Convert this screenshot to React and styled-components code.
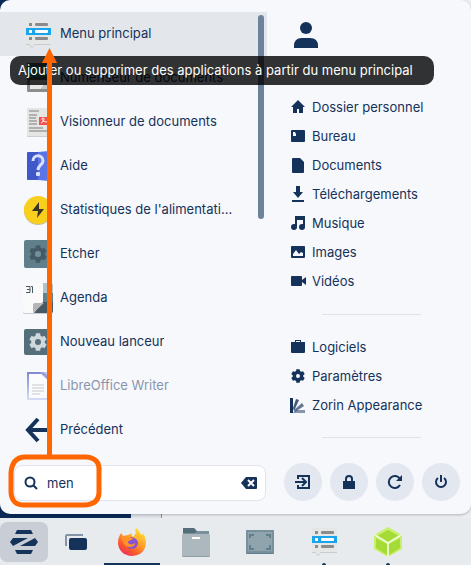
import React, { useState } from 'react'
import styled, { createGlobalStyle } from 'styled-components'

const GlobalStyle = createGlobalStyle`
  *, *::before, *::after {
    box-sizing: border-box;
  }
  body {
    margin: 0;
    background: #e8ebee;
    font-family: Inter, 'Liberation Sans', sans-serif;
    font-size: 13px;
    line-height: 20px;
    color: #15325a;
  }
  button, input {
    font: inherit;
    color: inherit;
  }
`

const Desktop = styled.div`
  display: flex;
  flex-direction: column;
  min-height: 100vh;
  background: linear-gradient(to right, #0b2a58 131px, #dfe4ea 131px, #dfe4ea 161px, #8c9299 161px, #8c9299 162px, #eceef1 162px);
`

const Menu = styled.main`
  position: relative;
  display: grid;
  grid-template-columns: minmax(0, 1fr) 204px;
  padding: 12px 0 13px;
  margin-bottom: 4px;
  background: #f6f8fc;
  border-radius: 10px;
  box-shadow: 0 1px 3px rgba(0, 0, 0, 0.25);
`

const Apps = styled.section`
  position: relative;
`

const AppList = styled.ul`
  list-style: none;
  margin: 0;
  padding: 0;
`

const AppItem = styled.li`
  position: relative;
`

const AppButton = styled.button`
  display: flex;
  align-items: center;
  gap: 6px;
  width: 100%;
  height: 44px;
  padding: 0 32px 0 22px;
  border: 0;
  text-align: left;
  cursor: pointer;
  background: ${(props) => (props.$active ? '#e3e7eb' : 'transparent')};
  opacity: ${(props) => (props.$faded ? 0.5 : 1)};
  svg {
    flex: none;
  }
  span {
    padding-bottom: 2px;
    overflow: hidden;
    white-space: nowrap;
    text-overflow: ellipsis;
  }
`

const Tooltip = styled.div`
  position: absolute;
  top: 100%;
  left: 10px;
  z-index: 2;
  min-width: 424px;
  padding: 4px 8px 5px;
  border-radius: 10px;
  background: rgba(0, 0, 0, 0.8);
  color: #fff;
  white-space: nowrap;
`

const ScrollThumb = styled.div`
  position: absolute;
  top: 3px;
  right: 3px;
  width: 6px;
  height: 204px;
  border-radius: 3px;
  background: #6d839b;
`

const Search = styled.label`
  display: flex;
  align-items: center;
  gap: 9px;
  height: 36px;
  margin: 13px 1px 0 14px;
  padding: 0 8px 0 9px;
  background: #fff;
  border: 1px solid #e1e4ed;
  border-radius: 8px;
  svg {
    flex: none;
  }
`

const SearchInput = styled.input`
  flex: 1;
  min-width: 0;
  padding: 0;
  border: 0;
  outline: 0;
  background: transparent;
`

const ClearButton = styled.button`
  display: flex;
  padding: 0;
  border: 0;
  background: transparent;
  cursor: pointer;
`

const Side = styled.section`
  display: flex;
  flex-direction: column;
  padding-left: 17px;
`

const Avatar = styled.button`
  display: flex;
  align-self: flex-start;
  margin: 8px 0 42px 8px;
  padding: 0;
  border: 0;
  background: transparent;
`

const Places = styled.nav`
  display: flex;
  flex-direction: column;
`

const Place = styled.a`
  display: flex;
  align-items: center;
  gap: 6px;
  height: 29px;
  padding-left: 6px;
  color: inherit;
  text-decoration: none;
`

const Divider = styled.hr`
  width: 99px;
  margin: ${(props) => (props.$last ? '18px 0 0 38px' : '19px 0 17px 38px')};
  border: 0;
  border-top: 1px solid #dfe3eb;
`

const Session = styled.div`
  display: flex;
  gap: 8px;
  margin-top: auto;
`

const RoundButton = styled.button`
  display: grid;
  place-items: center;
  width: 38px;
  height: 38px;
  padding: 0;
  border: 0;
  border-radius: 50%;
  background: #e3e7ef;
  cursor: pointer;
`

const Annotation = styled.svg`
  position: absolute;
  top: 0;
  left: 0;
  z-index: 3;
  pointer-events: none;
`

const Taskbar = styled.footer`
  display: flex;
  flex: 1;
  min-height: 47px;
  background: #e8ebee;
`

const Running = styled.div`
  display: flex;
  gap: 8px;
`

const TaskButton = styled.button`
  position: relative;
  display: grid;
  place-items: center;
  width: 56px;
  padding: 0;
  border: 0;
  background: transparent;
  cursor: pointer;
  &::after {
    content: '';
    position: absolute;
    bottom: 0;
    width: ${(props) => (props.$state === 'focused' ? '100%' : '4px')};
    height: 2px;
    border-radius: ${(props) => (props.$state === 'focused' ? 0 : '2px 2px 0 0')};
    background: #15325a;
    display: ${(props) => (props.$state ? 'block' : 'none')};
  }
`

const StartButton = styled(TaskButton)`
  width: 48px;
  height: 40px;
  margin-top: 4px;
  border-radius: 7px;
  background: #c9ced6;
`

const navy = '#15325a'

const gearPath = (cx, cy, r, hole) => {
  const pts = []
  for (let i = 0; i < 6; i++) {
    const a = (i * Math.PI) / 3 - Math.PI / 2
    const at = (d, q) => `${(cx + q * Math.cos(a + d)).toFixed(2)},${(cy + q * Math.sin(a + d)).toFixed(2)}`
    pts.push(at(-0.38, r * 0.76), at(-0.24, r), at(0.24, r), at(0.38, r * 0.76))
  }
  return `M${pts.join('L')}Z M${cx - hole},${cy} a${hole},${hole} 0 1 0 ${hole * 2},0 a${hole},${hole} 0 1 0 ${-hole * 2},0Z`
}

const Icon = ({ size = 32, children }) => (
  <svg width={size} height={size} viewBox={`0 0 ${size} ${size}`} aria-hidden="true">{children}</svg>
)

const MenuIcon = () => (
  <Icon>
    <path d="M4 3h25v24H13l-3 3-3-3H4z" fill="#c9cbcc" />
    <path d="M4 2h25v24H13l-3 3-3-3H4z" fill="#e5e6e6" />
    <path d="M4 10h25v7H4z" fill="#19a5ee" />
    <g fill="#8b8b8b">
      <rect x="7" y="5" width="3" height="3" />
      <rect x="13" y="5" width="13" height="3" rx="1" />
      <rect x="7" y="19" width="3" height="3" />
      <rect x="13" y="19" width="13" height="3" rx="1" />
    </g>
    <g fill="#fff">
      <rect x="7" y="12" width="3" height="3" />
      <rect x="13" y="12" width="13" height="3" rx="1" />
    </g>
  </Icon>
)

const ScannerIcon = () => (
  <Icon>
    <rect x="5" y="1" width="23" height="17" rx="1" fill="#565b5b" />
    <path d="M7 4h20v11H7z" fill="#169a8a" />
    <rect x="5" y="18" width="23" height="12" rx="1" fill="#8d8d8d" />
    <path d="M8 18h18l-7 9H8z" fill="#e8e8e8" />
    <path d="M26 18v9h-7z" fill="#c4c4c4" />
  </Icon>
)

const ViewerIcon = () => (
  <Icon>
    <rect x="5" y="3" width="23" height="28" rx="1" fill="#cfcfcf" />
    <rect x="5" y="2" width="23" height="28" rx="1" fill="#e5e5e4" />
    <path d="M7 9h8M7 12h7M7 15h8M7 18h8M7 22h14M7 25h18" stroke="#b0b0b0" strokeWidth="2" />
    <path d="M7 5h10" stroke="#808080" />
    <path d="M17 11h11v8H17z" fill="#f2524d" />
    <path d="M19 17c3-1 4-5 2-5s-1 4 4 4" fill="none" stroke="#fff" />
  </Icon>
)

const HelpIcon = () => (
  <Icon>
    <path d="M5 3q0-1 1-1h10v28H6q-1 0-1-1z" fill="#4058c8" />
    <path d="M16 2l11-1v30l-11-1z" fill="#5975e6" />
    <path d="M11 11c0-7 10-7 10 0 0 4-5 4-5 9" fill="none" stroke="#d9e0fa" strokeWidth="3" />
    <rect x="14" y="22" width="4" height="4" rx="1" fill="#d9e0fa" />
  </Icon>
)

const PowerStatsIcon = () => (
  <Icon>
    <circle cx="16" cy="17" r="14" fill="#c9bd91" />
    <circle cx="16" cy="16" r="14" fill="#f9cf1e" />
    <path d="M17 8l-7 9h6l-1 7 7-9h-5z" fill="#39342a" />
  </Icon>
)

const EtcherIcon = () => (
  <Icon>
    <rect x="2" y="2" width="28" height="28" rx="2" fill="#607f8b" />
    <path d={gearPath(16, 16, 9, 3)} fill="#455a64" fillRule="evenodd" />
    <circle cx="16" cy="16" r="3" fill="#71909b" />
  </Icon>
)

const CalendarIcon = () => (
  <Icon>
    <rect x="1" y="2" width="30" height="30" rx="2" fill="#c9cbce" />
    <path d="M3 1h18v19l-9 11H3q-2 0-2-2V3q0-2 2-2z" fill="#fafafa" />
    <path d="M21 1h8q2 0 2 2v8H21z" fill="#b0c3cb" />
    <path d="M21 11h10v9H21z" fill="#5f8290" />
    <path d="M21 20h10v9q0 2-2 2H12z" fill="#455a64" />
    <path d="M11 31v-8q0-2 2-2h9z" fill="#b5b5b5" />
    <path d="M4 4.500h4v6H4M5 7.500h3M9 4.500h1.500v6.500" fill="none" stroke="#455a64" />
  </Icon>
)

const LauncherIcon = () => (
  <Icon>
    <rect x="2" y="3" width="28" height="26" rx="2" fill="#546e7a" />
    <path d={gearPath(16, 16, 9, 3)} fill="#cfd8dc" fillRule="evenodd" />
  </Icon>
)

const WriterIcon = () => (
  <Icon>
    <defs>
      <linearGradient id="writer" x1="0" y1="0" x2="0" y2="1">
        <stop offset="0" stopColor="#1119a8" />
        <stop offset="1" stopColor="#b3bdf0" />
      </linearGradient>
    </defs>
    <path d="M6 3h20v26H6z" fill="#fff" stroke="url(#writer)" strokeWidth="2" />
    <path d="M17 2h10v9z" fill="#3e49bb" />
    <path d="M21 2h6v5z" fill="#8792df" />
    <path d="M10 15h12M10 18h12M10 21h12M10 24h8" stroke="#9b9b9b" />
  </Icon>
)

const BackIcon = () => (
  <Icon>
    <path d="M16 5L6 16l10 11M6 16h21" fill="none" stroke={navy} strokeWidth="4" />
  </Icon>
)

const apps = [
  { name: 'Menu principal', icon: <MenuIcon /> },
  { name: 'Numériseur de documents', icon: <ScannerIcon /> },
  { name: 'Visionneur de documents', icon: <ViewerIcon /> },
  { name: 'Aide', icon: <HelpIcon /> },
  { name: "Statistiques de l'alimentation", icon: <PowerStatsIcon /> },
  { name: 'Etcher', icon: <EtcherIcon /> },
  { name: 'Agenda', icon: <CalendarIcon /> },
  { name: 'Nouveau lanceur', icon: <LauncherIcon /> },
  { name: 'LibreOffice Writer', icon: <WriterIcon />, faded: true },
  { name: 'Précédent', icon: <BackIcon /> },
]

const places = [
  { name: 'Dossier personnel', icon: <path d="M8 1l7 7h-2v6h-4v-4H7v4H3V8H1z" /> },
  { name: 'Bureau', icon: <path fillRule="evenodd" d="M2 2h12q1 0 1 1v10q0 1-1 1H2q-1 0-1-1V3q0-1 1-1zM3 4v4h3V6L5 4z" /> },
  { name: 'Documents', icon: <path d="M3 1h7l4 4v10q0 1-1 1H3q-1 0-1-1V2q0-1 1-1z" /> },
  { name: 'Téléchargements', icon: <path d="M6 0h4v6h3l-5 6-5-6h3zM2 14h12v2H2z" /> },
  { name: 'Musique', icon: <path d="M5 1h10v11a3 3 0 1 1-3-3h1V5H7v7a3 3 0 1 1-3-3h1z" /> },
  { name: 'Images', icon: <path fillRule="evenodd" d="M2 2h12q1 0 1 1v10q0 1-1 1H2q-1 0-1-1V3q0-1 1-1zM3 12h10V9l-2-1-2 2-3-4-3 4z" /> },
  { name: 'Vidéos', icon: <path d="M2 3h9q1 0 1 1v3l4-3v8l-4-3v3q0 1-1 1H2q-1 0-1-1V4q0-1 1-1z" /> },
]

const system = [
  { name: 'Logiciels', icon: <path fillRule="evenodd" d="M5 3V1h6v2h4v10q0 1-1 1H2q-1 0-1-1V3zM6 3h4V2H6z" /> },
  { name: 'Paramètres', icon: <path fillRule="evenodd" d={gearPath(8, 8, 7, 2)} /> },
  {
    name: 'Zorin Appearance',
    icon: (
      <>
        <path d="M0 1h3v15H0z" />
        <path d="M3 11l3-9 3 1-5 11z" opacity=".8" />
        <path d="M4 13l8-7 2 3-9 6z" opacity=".65" />
        <path d="M2 16l5-3h8v3z" opacity=".5" />
      </>
    ),
  },
]

const PlaceLink = ({ name, icon }) => (
  <Place href="#">
    <svg width="16" height="16" viewBox="0 0 16 16" fill={navy} aria-hidden="true">{icon}</svg>
    {name}
  </Place>
)

const session = [
  { name: 'Se déconnecter', icon: <path d="M4 6V3h11v12H4v-3M1 9h10M8 5l4 4-4 4" fill="none" stroke={navy} strokeWidth="2" /> },
  { name: 'Verrouiller', icon: <path fillRule="evenodd" fill={navy} d="M3 8h2V6q0-4 4-4t4 4v2h2v8H3zM7 8h4V6q0-2-2-2T7 6z" /> },
  {
    name: 'Redémarrer',
    icon: (
      <>
        <path d="M14 12a6 6 0 1 1 0-6" fill="none" stroke={navy} strokeWidth="2" />
        <path d="M16 2v6h-6z" fill={navy} />
      </>
    ),
  },
  { name: 'Éteindre', icon: <path d="M6 5a5 5 0 1 0 6 0M9 2v7" fill="none" stroke={navy} strokeWidth="2" /> },
]

const ZorinLogo = () => (
  <svg width="28" height="24" viewBox="0 0 28 24" fill={navy} aria-hidden="true">
    <path d="M7 0h14l2 4H5zM5 20h18l-2 4H7zM3 8h15L3 16l-3-4zM25 8l3 4-3 4H10z" />
  </svg>
)

const WindowsIcon = () => (
  <svg width="22" height="16" viewBox="0 0 22 16" aria-hidden="true">
    <path d="M1 12V2q0-1 1-1h16" fill="none" stroke="#8493a8" strokeWidth="2" />
    <rect x="4" y="4" width="18" height="12" rx="2" fill={navy} />
  </svg>
)

const FirefoxIcon = () => (
  <svg width="28" height="30" viewBox="0 0 28 30" aria-hidden="true">
    <defs>
      <linearGradient id="fox" x1=".85" y1=".1" x2=".25" y2="1">
        <stop offset="0" stopColor="#ffe135" />
        <stop offset=".45" stopColor="#ff9724" />
        <stop offset=".75" stopColor="#fa542e" />
        <stop offset="1" stopColor="#ee2f67" />
      </linearGradient>
    </defs>
    <path d="M18 1c4 3 4 6 6 7 0 0 1-1 1-2 6 9 3 23-11 23C2 29-4 17 3 6l2 3 5-1c2-1 4-2 4-2-1 2 0 3 1 4l3-4c-1-2-1-3 0-5z" fill="url(#fox)" />
    <circle cx="14" cy="16" r="6" fill="#8854d3" />
    <path d="M14 10c4-2 7 1 8 5l-3-2c-1-2-3-2-5-3z" fill="#ffb82e" />
    <path d="M3 10c3-2 6 0 7 0l5 1c-1 3-5 2-5 4 0 3 5 3 7 1 1 4-8 6-11 1z" fill="#ff9327" />
  </svg>
)

const FilesIcon = () => (
  <svg width="28" height="30" viewBox="0 0 28 30" aria-hidden="true">
    <path d="M1 1h11l2 3h13v6H1z" fill="#78909c" />
    <path d="M1 1h11l3 3-2 2H1z" fill="#546e7a" />
    <rect y="8" width="28" height="22" rx="1" fill="#8f9ca3" />
    <rect y="7" width="28" height="22" rx="1" fill="#adb8be" />
    <path d="M10 10h8v2h-8z" fill="#fff" />
  </svg>
)

const ScreenIcon = () => (
  <svg width="28" height="24" viewBox="0 0 28 24" aria-hidden="true">
    <rect y="1" width="28" height="23" rx="1" fill="#607d8b" />
    <rect x="1" y="1" width="26" height="21" fill="#90a4ae" stroke="#78909c" strokeWidth="2" />
    <path d="M4 8V5h4M20 5h4v3M4 15v4h4M20 19h4v-4" fill="none" stroke="#607d8b" strokeWidth="2" />
  </svg>
)

const CubeIcon = () => (
  <svg width="28" height="30" viewBox="0 0 28 30" aria-hidden="true">
    <path d="M14 0l14 8v14l-14 8-14-8V8z" fill="#c6f06c" />
    <path d="M14 3l11 6-11 6L3 9zM2 11l11 6v11L2 21zM26 11v10l-11 7V17z" fill="#a5db36" />
    <path d="M1 8l13 8 13-8M14 16v14" fill="none" stroke="#f1fbdc" strokeWidth="1.5" />
  </svg>
)

export default function App() {
  const [query, setQuery] = useState('men')

  return (
    <>
      <GlobalStyle />
      <Desktop>
        <Menu>
          <Apps>
            <AppList>
              {apps.map((app, i) => (
                <AppItem key={app.name}>
                  <AppButton $active={i === 0} $faded={app.faded}>
                    {app.icon}
                    <span>{app.name}</span>
                  </AppButton>
                  {i === 0 && (
                    <Tooltip role="tooltip">
                      Ajouter ou supprimer des applications à partir du menu principal
                    </Tooltip>
                  )}
                </AppItem>
              ))}
            </AppList>
            <ScrollThumb />
            <Search>
              <svg width="14" height="14" viewBox="0 0 14 14" fill="none" stroke={navy} strokeWidth="2" aria-hidden="true">
                <circle cx="6" cy="6" r="4.5" />
                <path d="M9 9l4 4" />
              </svg>
              <SearchInput
                aria-label="Rechercher"
                value={query}
                onChange={(e) => setQuery(e.target.value)}
              />
              <ClearButton aria-label="Effacer" onClick={() => setQuery('')}>
                <svg width="16" height="12" viewBox="0 0 16 12" aria-hidden="true">
                  <path d="M5 0h10q1 0 1 1v10q0 1-1 1H5L0 6z" fill={navy} />
                  <path d="M7 3l6 6M13 3L7 9" stroke="#fff" strokeWidth="2" />
                </svg>
              </ClearButton>
            </Search>
          </Apps>

          <Side>
            <Avatar aria-label="Utilisateur">
              <svg width="28" height="30" viewBox="0 0 28 30" fill={navy} aria-hidden="true">
                <circle cx="14" cy="8" r="6" />
                <path d="M2 28v-2q0-8 8-8h8q8 0 8 8v2z" />
              </svg>
            </Avatar>
            <Places>
              {places.map((p) => <PlaceLink key={p.name} {...p} />)}
            </Places>
            <Divider />
            <Places>
              {system.map((p) => <PlaceLink key={p.name} {...p} />)}
            </Places>
            <Divider $last />
            <Session>
              {session.map((s) => (
                <RoundButton key={s.name} aria-label={s.name}>
                  <Icon size={18}>{s.icon}</Icon>
                </RoundButton>
              ))}
            </Session>
          </Side>

          <Annotation width="110" height="514" viewBox="0 0 110 514" aria-hidden="true">
            <path d="M49.500 457V60" stroke="#ff6600" strokeWidth="5" />
            <path d="M49.500 48L57 63H42z" fill="#ff6600" />
            <path
              d="M24 457H86Q100 458 99 471V492Q99 504 85 505H26Q11 506 11 491V473Q12 458 24 457Z"
              fill="none"
              stroke="#ff6600"
              strokeWidth="5"
            />
          </Annotation>
        </Menu>

        <Taskbar>
          <StartButton aria-label="Menu Zorin"><ZorinLogo /></StartButton>
          <TaskButton aria-label="Fenêtres"><WindowsIcon /></TaskButton>
          <Running>
            <TaskButton $state="focused" aria-label="Firefox"><FirefoxIcon /></TaskButton>
            <TaskButton aria-label="Fichiers"><FilesIcon /></TaskButton>
            <TaskButton aria-label="Capture"><ScreenIcon /></TaskButton>
            <TaskButton $state="open" aria-label="Menu principal"><MenuIcon /></TaskButton>
            <TaskButton $state="open" aria-label="Balena"><CubeIcon /></TaskButton>
          </Running>
        </Taskbar>
      </Desktop>
    </>
  )
}
